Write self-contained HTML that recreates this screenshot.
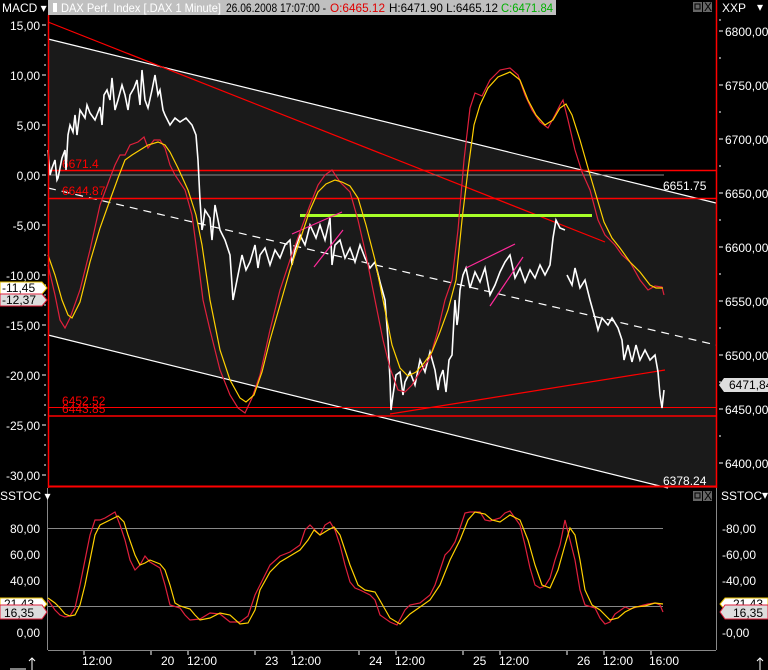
<!DOCTYPE html>
<html><head><meta charset="utf-8"><style>
html,body{margin:0;padding:0;background:#000;width:768px;height:670px;overflow:hidden}
svg{display:block}
text{font-family:"Liberation Sans",sans-serif;font-size:12px}
</style></head><body>
<svg width="768" height="670" viewBox="0 0 768 670" xmlns="http://www.w3.org/2000/svg">
<rect width="768" height="670" fill="#000"/>
<polygon points="48,39 716,203 716,488 668,488 48,335" fill="#1a1a1a"/>
<rect x="48" y="489" width="668" height="161" fill="#000"/>
<!-- header -->
<rect x="48" y="0" width="508" height="15" fill="#c0c0c0"/>
<rect x="53" y="3" width="4" height="9" fill="#fff"/>
<text x="61" y="12" fill="#fff" font-size="12" textLength="160" lengthAdjust="spacingAndGlyphs">DAX Perf. Index [.DAX  1 Minute]</text>
<text x="226" y="12" fill="#000" font-size="12" textLength="100" lengthAdjust="spacingAndGlyphs">26.06.2008 17:07:00 -</text>
<text x="330" y="12" fill="#e00000" font-size="12" textLength="55" lengthAdjust="spacingAndGlyphs">O:6465.12</text>
<text x="389" y="12" fill="#000" font-size="12" textLength="109" lengthAdjust="spacingAndGlyphs">H:6471.90 L:6465.12</text>
<text x="501" y="12" fill="#00b000" font-size="12" textLength="52" lengthAdjust="spacingAndGlyphs">C:6471.84</text>
<rect x="693" y="2" width="9" height="10" fill="#666"/><rect x="695" y="4" width="5" height="5" fill="none" stroke="#000"/>
<rect x="703" y="2" width="9" height="10" fill="#666"/><text x="704" y="11" fill="#000" font-size="10">X</text>
<text x="2" y="12" fill="#fff" font-size="11">MACD ▾</text>
<text x="722" y="12" fill="#fff" font-size="11">XXP</text>
<text x="757" y="11" fill="#fff" font-size="9">▾</text>
<line x1="48" y1="39" x2="716" y2="203" stroke="#fff" stroke-width="1.2"/>
<line x1="48" y1="335" x2="668" y2="488" stroke="#fff" stroke-width="1.2"/>
<line x1="48" y1="188" x2="716" y2="345" stroke="#fff" stroke-width="1.2" stroke-dasharray="8,6"/>
<line x1="48" y1="22" x2="605" y2="242" stroke="#f00" stroke-width="1.2"/>
<line x1="390" y1="414" x2="665" y2="370" stroke="#f00" stroke-width="1.2"/>
<line x1="48" y1="175" x2="664" y2="175" stroke="#888"/>
<line x1="48" y1="170.5" x2="716" y2="170.5" stroke="#f00" stroke-width="1.5"/>
<line x1="48" y1="198.5" x2="716" y2="198.5" stroke="#f00" stroke-width="1.5"/>
<line x1="48" y1="407.5" x2="716" y2="407.5" stroke="#f00"/>
<line x1="48" y1="416" x2="716" y2="416" stroke="#f00" stroke-width="1.5"/>
<line x1="48" y1="486.5" x2="716" y2="486.5" stroke="#f00" stroke-width="2"/>
<text x="62" y="168" fill="#f00" font-size="11">6671.4</text>
<text x="62" y="195" fill="#f00" font-size="11">6644.87</text>
<text x="62" y="405" fill="#f00" font-size="11">6452.52</text>
<text x="62" y="413" fill="#f00" font-size="11">6443.85</text>
<text x="663" y="190" fill="#fff" font-size="11">6651.75</text>
<text x="663" y="485" fill="#fff" font-size="11">6378.24</text>
<line x1="300" y1="215.5" x2="592" y2="215.5" stroke="#a8ff28" stroke-width="3"/>
<polyline fill="none" stroke="#fff" stroke-width="1.6" points="48,150 50,175 52,168 55,160 57,180 58,178 62,158 65,150 66,170 68,135 70,125 73,132 75,115 77,135 80,110 85,118 87,105 90,113 95,120 100,107 102,125 104,95 107,90 110,100 112,78 115,110 118,100 122,85 125,95 128,110 130,95 134,88 137,80 140,105 142,70 145,100 148,108 152,90 155,75 158,95 160,90 163,110 165,115 170,125 175,118 180,122 186,118 192,125 196,135 198,160 200,200 202,230 203,225 205,210 210,218 212,240 215,205 220,230 225,240 230,255 233,300 235,290 238,275 242,255 246,270 250,262 255,245 258,268 260,255 265,248 270,265 275,250 280,258 285,245 290,240 292,265 295,250 300,235 305,245 310,225 316,238 320,225 325,240 330,218 332,265 335,245 340,240 345,258 350,248 355,262 360,245 365,258 370,268 375,262 380,282 385,300 388,340 390,380 391,410 393,395 396,375 400,372 403,395 405,382 410,372 415,385 420,360 425,372 430,352 435,370 438,390 440,378 443,370 446,392 449,360 452,355 455,300 457,325 458,318 460,290 463,275 466,268 470,288 475,272 480,282 485,268 490,295 495,285 500,272 505,262 510,255 515,278 520,268 525,282 530,270 535,278 540,265 545,275 550,265 553,238 556,220 560,228 565,230"/>
<polyline fill="none" stroke="#fff" stroke-width="1.6" points="567,275 572,285 575,268 580,288 585,280 590,300 595,318 598,330 602,318 608,325 612,318 618,328 622,340 624,360 628,345 632,362 636,345 640,360 645,350 650,360 655,355 658,372 660,395 662,408 664,390"/>
<g stroke="#ff2a9a" stroke-width="1.2">
<line x1="292" y1="234" x2="342" y2="212"/><line x1="314" y1="267" x2="343" y2="230"/>
<line x1="466" y1="268" x2="515" y2="244"/><line x1="490" y1="306" x2="523" y2="257"/>
</g>
<polyline fill="none" stroke="#e0203c" stroke-width="1.2" points="48,265 55,295 60,320 65,328 70,318 80,290 90,250 100,205 110,178 115,165 120,155 125,155 130,145 138,142 144,137 148,148 154,140 160,140 165,148 170,165 175,175 185,190 192,215 198,260 203,300 210,330 220,370 230,395 238,408 245,413 252,398 260,375 270,330 280,290 290,260 300,232 310,205 318,185 325,175 332,170 340,182 350,192 358,220 366,255 375,300 383,340 390,368 398,390 405,392 412,385 420,372 430,358 438,330 445,300 452,280 458,230 464,160 470,108 475,93 482,96 490,80 500,70 510,68 518,75 525,95 532,110 540,122 548,128 555,115 560,105 563,100 568,120 575,150 582,172 590,190 598,220 605,235 615,245 622,255 630,262 640,280 648,290 655,286 662,287 664,295"/>
<polyline fill="none" stroke="#ffd000" stroke-width="1.2" points="48,255 55,275 62,300 68,315 72,318 80,302 90,262 100,228 110,200 118,178 125,160 132,155 140,150 148,145 158,142 165,145 170,152 178,168 188,190 196,215 202,245 210,300 220,350 230,380 240,398 246,402 254,395 262,372 270,340 280,305 290,270 300,240 310,210 318,192 326,184 335,180 342,182 350,186 358,198 366,225 375,260 384,305 392,345 400,368 408,376 416,372 424,363 432,352 440,332 448,310 456,280 462,220 468,170 474,125 480,105 488,88 498,77 510,72 520,80 528,100 536,115 545,125 553,120 560,108 566,104 572,115 580,140 588,168 596,195 604,222 612,238 620,248 630,262 640,272 650,285 656,288 663,288"/>
<line x1="48.5" y1="15" x2="48.5" y2="488" stroke="#f00" stroke-width="1.5"/>
<line x1="716.5" y1="0" x2="716.5" y2="488" stroke="#f00" stroke-width="1.5"/>
<line x1="47.5" y1="488" x2="47.5" y2="650" stroke="#888"/>
<line x1="716.5" y1="488" x2="716.5" y2="650" stroke="#888"/>
<line x1="48" y1="650.5" x2="716" y2="650.5" stroke="#888"/>
<g fill="#fff" font-size="12" text-anchor="end">
<text x="40" y="30">15,00</text><text x="40" y="80">10,00</text><text x="40" y="130">5,00</text><text x="40" y="180">0,00</text>
<text x="40" y="230">-5,00</text><text x="40" y="280">-10,00</text><text x="40" y="330">-15,00</text><text x="40" y="380">-20,00</text>
<text x="40" y="430">-25,00</text><text x="40" y="480">-30,00</text>
<text x="40" y="533">80,00</text><text x="40" y="559">60,00</text><text x="40" y="585">40,00</text><text x="40" y="637">0,00</text>
</g>
<g fill="#fff" font-size="12">
<text x="725" y="36">6800,00</text><text x="725" y="90">6750,00</text><text x="725" y="144">6700,00</text><text x="725" y="198">6650,00</text>
<text x="725" y="252">6600,00</text><text x="725" y="306">6550,00</text><text x="725" y="360">6500,00</text><text x="725" y="414">6450,00</text>
<text x="725" y="468">6400,00</text>
<text x="722" y="533">-80,00</text><text x="722" y="559">-60,00</text><text x="722" y="585">-40,00</text><text x="722" y="637">-0,00</text>
</g>
<g stroke="#fff" stroke-width="1">
<path d="M42 25h4M42 75h4M42 125h4M42 175h4M42 225h4M42 275h4M42 325h4M42 375h4M42 425h4M42 475h4M44 35h2M44 45h2M44 55h2M44 65h2M44 85h2M44 95h2M44 105h2M44 115h2M44 135h2M44 145h2M44 155h2M44 165h2M44 185h2M44 195h2M44 205h2M44 215h2M44 235h2M44 245h2M44 255h2M44 265h2M44 285h2M44 295h2M44 305h2M44 315h2M44 335h2M44 345h2M44 355h2M44 365h2M44 385h2M44 395h2M44 405h2M44 415h2M44 435h2M44 445h2M44 455h2M44 465h2"/>
<path d="M719 31h4M719 85h4M719 139h4M719 193h4M719 247h4M719 301h4M719 355h4M719 409h4M719 463h4M719 20h2M719 58h2M719 112h2M719 166h2M719 220h2M719 274h2M719 328h2M719 382h2M719 436h2"/>
</g>
<polygon points="0,282 42,282 47,288 42,294 0,294" fill="#fff" stroke="#e8c000"/>
<text x="2" y="292" fill="#000" font-size="12">-11,45</text>
<polygon points="0,294 42,294 47,300 42,306 0,306" fill="#ddd" stroke="#e0203c"/>
<text x="2" y="304" fill="#000" font-size="12">-12,37</text>
<polygon points="724,378 768,378 768,392 724,392 719,385" fill="#ddd"/>
<text x="729" y="389" fill="#000" font-size="12">6471,84</text>
<text x="0" y="500" fill="#fff" font-size="11">SSTOC ▾</text>
<text x="721" y="500" fill="#fff" font-size="11">SSTOC</text>
<text x="762" y="499" fill="#fff" font-size="9">▾</text>
<rect x="693" y="491" width="9" height="10" fill="#666"/><rect x="695" y="493" width="5" height="5" fill="none" stroke="#000"/>
<rect x="703" y="491" width="9" height="10" fill="#666"/><text x="704" y="500" fill="#000" font-size="10">X</text>
<line x1="48" y1="528.5" x2="663" y2="528.5" stroke="#888"/>
<line x1="48" y1="606.5" x2="663" y2="606.5" stroke="#888"/>
<polyline fill="none" stroke="#e0203c" stroke-width="1.2" points="48,600 55,610 60,615 65,617 70,616 75,608 80,585 85,560 90,535 95,520 100,520 105,518 110,515 115,512 120,525 125,540 130,560 135,570 140,565 145,556 150,562 160,568 165,585 170,605 180,608 185,615 190,620 200,619 210,613 220,614 230,622 240,622 248,616 255,595 260,585 270,565 280,556 290,552 300,545 305,530 310,525 315,530 320,535 325,525 330,522 335,530 340,545 345,565 350,582 355,588 360,590 370,595 375,600 380,615 390,622 397,625 405,610 410,605 420,603 430,595 435,585 440,570 445,555 450,550 455,542 460,528 465,513 470,512 480,512 485,520 490,521 500,518 505,513 510,511 520,525 525,545 530,568 535,585 540,588 545,586 550,578 555,560 560,545 565,520 570,540 575,560 580,590 585,605 595,608 600,618 605,624 610,622 615,614 625,607 630,609 640,606 648,604 655,603 660,605 663,612"/>
<polyline fill="none" stroke="#ffd000" stroke-width="1.2" points="48,598 55,603 60,608 65,614 70,616 75,615 80,605 85,585 90,560 95,535 100,525 110,520 118,516 124,522 128,535 135,555 140,565 145,563 150,560 160,564 165,570 170,585 175,603 180,606 190,609 195,615 200,620 210,618 220,613 230,615 240,624 248,623 255,610 260,590 270,572 280,562 290,556 300,550 308,540 314,530 320,535 328,530 334,527 340,535 345,550 350,565 358,585 365,590 375,592 382,604 390,618 400,624 410,614 420,607 430,600 440,585 450,560 460,540 468,520 475,512 485,514 492,520 500,522 510,515 520,520 528,540 535,565 542,585 550,588 558,570 565,545 570,528 575,535 580,560 585,590 592,605 600,610 610,620 618,618 625,612 635,607 645,606 655,603 663,604"/>
<polygon points="0,598 42,598 47,604 42,610 0,610" fill="#fff" stroke="#e8c000"/>
<text x="4" y="608" fill="#000" font-size="12">21,43</text>
<polygon points="0,605 42,605 47,612 42,619 0,619" fill="#ddd" stroke="#e0203c"/>
<text x="4" y="617" fill="#000" font-size="12">16,35</text>
<polygon points="725,598 768,598 768,610 725,610 720,604" fill="#fff" stroke="#e8c000"/>
<text x="733" y="608" fill="#000" font-size="12">21,43</text>
<polygon points="725,605 768,605 768,619 725,619 720,612" fill="#ddd" stroke="#e0203c"/>
<text x="733" y="617" fill="#000" font-size="12">16,35</text>
<g stroke="#fff"><path d="M84 651v4M151 651v4M188 651v4M255 651v4M292 651v4M359 651v4M396 651v4M463 651v4M500 651v4M567 651v4M604 651v4M651 651v4"/></g>
<g fill="#fff" font-size="12">
<text x="82" y="665">12:00</text><text x="161" y="665">20</text><text x="187" y="665">12:00</text>
<text x="265" y="665">23</text><text x="291" y="665">12:00</text><text x="369" y="665">24</text><text x="395" y="665">12:00</text>
<text x="473" y="665">25</text><text x="499" y="665">12:00</text><text x="577" y="665">26</text><text x="603" y="665">12:00</text>
<text x="649" y="665">16:00</text>
</g>
<path d="M32 670v-12M29 661l3-3 3 3M760 670v-12M757 661l3-3 3 3M10 669h16" stroke="#fff" fill="none"/>
</svg>
</body></html>
